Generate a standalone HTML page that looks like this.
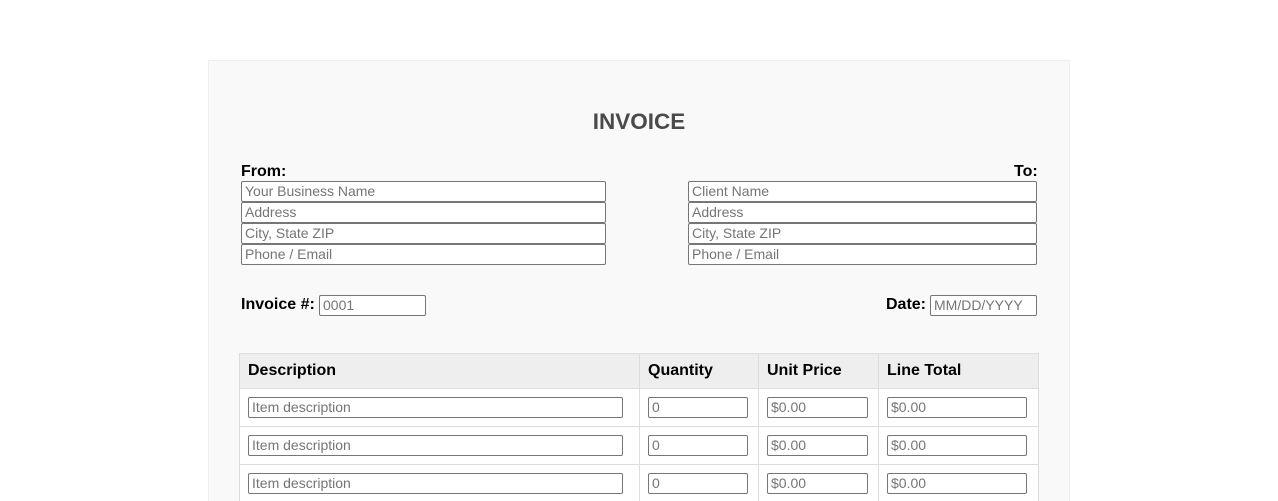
<!DOCTYPE html>
<html style="overflow:hidden;height:501px"><head><style>
body{margin:0;background:#fff;width:1278px;height:501px;overflow:hidden;position:relative;font-family:"Liberation Sans",Arial,sans-serif}
.card{position:absolute;left:208px;top:60px;width:862px;height:441px;background:#f9f9f9;border:1px solid #eee;border-bottom:none;box-sizing:border-box}
.a{position:absolute}
.in{position:absolute;box-sizing:border-box;border:1px solid #767676;border-radius:2px;background:#fff;font-size:14px;color:#757575;padding-left:3px;line-height:19px;height:21px}
.lb{position:absolute;font-weight:bold;font-size:16px;color:#000}
.h{position:absolute;font-weight:bold;font-size:16px;top:362px}
.c{position:absolute;background:#ddd}
</style></head><body>
<div class="card"></div>
<div class="a" style="left:0;width:1278px;top:109px;text-align:center;font-size:22.5px;font-weight:bold;color:#4a4a4a">INVOICE</div>
<div class="lb" style="left:241px;top:163px">From:</div>
<div class="lb" style="left:1014px;top:163px">To:</div>
<div class="in" style="left:241px;top:181px;width:365px">Your Business Name</div>
<div class="in" style="left:241px;top:202px;width:365px">Address</div>
<div class="in" style="left:241px;top:223px;width:365px">City, State ZIP</div>
<div class="in" style="left:241px;top:244px;width:365px">Phone / Email</div>
<div class="in" style="left:688px;top:181px;width:349px">Client Name</div>
<div class="in" style="left:688px;top:202px;width:349px">Address</div>
<div class="in" style="left:688px;top:223px;width:349px">City, State ZIP</div>
<div class="in" style="left:688px;top:244px;width:349px">Phone / Email</div>
<div class="lb" style="left:241px;top:296px">Invoice #:</div>
<div class="in" style="left:319px;top:295px;width:107px">0001</div>
<div class="lb" style="left:886px;top:296px">Date:</div>
<div class="in" style="left:930px;top:295px;width:107px">MM/DD/YYYY</div>
<div class="a" style="left:239px;top:353px;width:800px;height:35px;background:#eee"></div>
<div class="a" style="left:239px;top:388px;width:800px;height:113px;background:#fff"></div>
<div class="c" style="left:239px;top:353px;width:800px;height:1px"></div>
<div class="c" style="left:239px;top:388px;width:800px;height:1px"></div>
<div class="c" style="left:239px;top:426px;width:800px;height:1px"></div>
<div class="c" style="left:239px;top:464px;width:800px;height:1px"></div>
<div class="c" style="left:239px;top:353px;width:1px;height:148px"></div>
<div class="c" style="left:639px;top:353px;width:1px;height:148px"></div>
<div class="c" style="left:758px;top:353px;width:1px;height:148px"></div>
<div class="c" style="left:878px;top:353px;width:1px;height:148px"></div>
<div class="c" style="left:1038px;top:353px;width:1px;height:148px"></div>
<div class="h" style="left:248px">Description</div>
<div class="h" style="left:648px">Quantity</div>
<div class="h" style="left:767px">Unit Price</div>
<div class="h" style="left:887px">Line Total</div>
<div class="in" style="left:248px;top:397px;width:375px">Item description</div>
<div class="in" style="left:648px;top:397px;width:100px">0</div>
<div class="in" style="left:767px;top:397px;width:101px">$0.00</div>
<div class="in" style="left:887px;top:397px;width:140px">$0.00</div>
<div class="in" style="left:248px;top:435px;width:375px">Item description</div>
<div class="in" style="left:648px;top:435px;width:100px">0</div>
<div class="in" style="left:767px;top:435px;width:101px">$0.00</div>
<div class="in" style="left:887px;top:435px;width:140px">$0.00</div>
<div class="in" style="left:248px;top:473px;width:375px">Item description</div>
<div class="in" style="left:648px;top:473px;width:100px">0</div>
<div class="in" style="left:767px;top:473px;width:101px">$0.00</div>
<div class="in" style="left:887px;top:473px;width:140px">$0.00</div>
</body></html>
